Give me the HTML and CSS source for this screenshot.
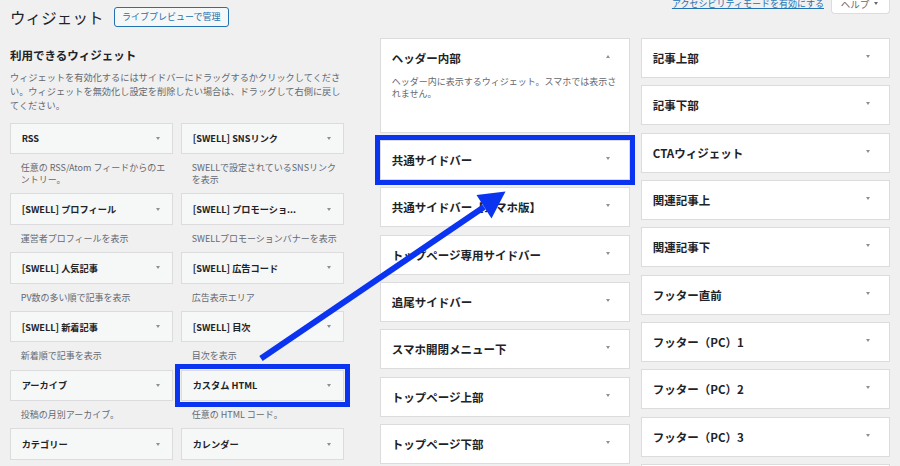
FILE: index.html
```html
<!DOCTYPE html>
<html lang="ja">
<head>
<meta charset="utf-8">
<title>ウィジェット</title>
<link rel="stylesheet" href="styles.css">
</head>
<body>
<div class="wrap">
  <header class="head">
    <div class="head-left">
      <h1 class="title">ウィジェット</h1>
      <a class="btn">ライブプレビューで管理</a>
    </div>
    <div class="meta">
      <a class="meta-link">アクセシビリティモードを有効にする</a>
      <div class="help">ヘルプ <span class="tri tri-down"></span></div>
    </div>
  </header>

  <main class="cols">
    <section class="avail">
      <h2 class="avail-title">利用できるウィジェット</h2>
      <p class="avail-desc">ウィジェットを有効化するにはサイドバーにドラッグするかクリックしてくださ<br>い。ウィジェットを無効化し設定を削除したい場合は、ドラッグして右側に戻し<br>てください。</p>
      <div class="wgrid">
        <div class="witem"><div class="wtop"><span class="wtitle">RSS</span><span class="warr"><span class="tri tri-down"></span></span></div><div class="wdesc">任意の RSS/Atom フィードからのエ<br>ントリー。</div></div>
        <div class="witem"><div class="wtop"><span class="wtitle">[SWELL] SNSリンク</span><span class="warr"><span class="tri tri-down"></span></span></div><div class="wdesc">SWELLで設定されているSNSリンク<br>を表示</div></div>
        <div class="witem"><div class="wtop"><span class="wtitle">[SWELL] プロフィール</span><span class="warr"><span class="tri tri-down"></span></span></div><div class="wdesc">運営者プロフィールを表示</div></div>
        <div class="witem"><div class="wtop"><span class="wtitle">[SWELL] プロモーショ...</span><span class="warr"><span class="tri tri-down"></span></span></div><div class="wdesc">SWELLプロモーションバナーを表示</div></div>
        <div class="witem"><div class="wtop"><span class="wtitle">[SWELL] 人気記事</span><span class="warr"><span class="tri tri-down"></span></span></div><div class="wdesc">PV数の多い順で記事を表示</div></div>
        <div class="witem"><div class="wtop"><span class="wtitle">[SWELL] 広告コード</span><span class="warr"><span class="tri tri-down"></span></span></div><div class="wdesc">広告表示エリア</div></div>
        <div class="witem"><div class="wtop"><span class="wtitle">[SWELL] 新着記事</span><span class="warr"><span class="tri tri-down"></span></span></div><div class="wdesc">新着順で記事を表示</div></div>
        <div class="witem"><div class="wtop"><span class="wtitle">[SWELL] 目次</span><span class="warr"><span class="tri tri-down"></span></span></div><div class="wdesc">目次を表示</div></div>
        <div class="witem"><div class="wtop"><span class="wtitle">アーカイブ</span><span class="warr"><span class="tri tri-down"></span></span></div><div class="wdesc">投稿の月別アーカイブ。</div></div>
        <div class="witem"><div class="wtop hl"><span class="wtitle">カスタム HTML</span><span class="warr"><span class="tri tri-down"></span></span></div><div class="wdesc">任意の HTML コード。</div></div>
        <div class="witem"><div class="wtop"><span class="wtitle">カテゴリー</span><span class="warr"><span class="tri tri-down"></span></span></div></div>
        <div class="witem"><div class="wtop"><span class="wtitle">カレンダー</span><span class="warr"><span class="tri tri-down"></span></span></div></div>
      </div>
    </section>

    <section class="sbcol mid">
      <div class="sb open">
        <div class="sb-row"><h3 class="sb-title">ヘッダー内部</h3><span class="sbarr"><span class="tri tri-up"></span></span></div>
        <p class="sb-desc">ヘッダー内に表示するウィジェット。スマホでは表示さ<br>れません。</p>
      </div>
      <div class="sb hl2"><h3 class="sb-title">共通サイドバー</h3><span class="sbarr"><span class="tri tri-down"></span></span></div>
      <div class="sb"><h3 class="sb-title">共通サイドバー【スマホ版】</h3><span class="sbarr"><span class="tri tri-down"></span></span></div>
      <div class="sb"><h3 class="sb-title">トップページ専用サイドバー</h3><span class="sbarr"><span class="tri tri-down"></span></span></div>
      <div class="sb"><h3 class="sb-title">追尾サイドバー</h3><span class="sbarr"><span class="tri tri-down"></span></span></div>
      <div class="sb"><h3 class="sb-title">スマホ開閉メニュー下</h3><span class="sbarr"><span class="tri tri-down"></span></span></div>
      <div class="sb"><h3 class="sb-title">トップページ上部</h3><span class="sbarr"><span class="tri tri-down"></span></span></div>
      <div class="sb"><h3 class="sb-title">トップページ下部</h3><span class="sbarr"><span class="tri tri-down"></span></span></div>
    </section>

    <section class="sbcol right">
      <div class="sb"><h3 class="sb-title">記事上部</h3><span class="sbarr"><span class="tri tri-down"></span></span></div>
      <div class="sb"><h3 class="sb-title">記事下部</h3><span class="sbarr"><span class="tri tri-down"></span></span></div>
      <div class="sb"><h3 class="sb-title">CTAウィジェット</h3><span class="sbarr"><span class="tri tri-down"></span></span></div>
      <div class="sb"><h3 class="sb-title">関連記事上</h3><span class="sbarr"><span class="tri tri-down"></span></span></div>
      <div class="sb"><h3 class="sb-title">関連記事下</h3><span class="sbarr"><span class="tri tri-down"></span></span></div>
      <div class="sb"><h3 class="sb-title">フッター直前</h3><span class="sbarr"><span class="tri tri-down"></span></span></div>
      <div class="sb"><h3 class="sb-title">フッター（PC）1</h3><span class="sbarr"><span class="tri tri-down"></span></span></div>
      <div class="sb"><h3 class="sb-title">フッター（PC）2</h3><span class="sbarr"><span class="tri tri-down"></span></span></div>
      <div class="sb"><h3 class="sb-title">フッター（PC）3</h3><span class="sbarr"><span class="tri tri-down"></span></span></div>
      <div class="sb"></div>
    </section>
  </main>

  <svg class="arrow" width="900" height="466" viewBox="0 0 900 466" aria-hidden="true">
    <line x1="261" y1="358.5" x2="484" y2="207" stroke="#0a34f0" stroke-width="6"/>
    <polygon points="505.5,191.5 476.5,195 491.5,218.5" fill="#0a34f0"/>
  </svg>
</div>
</body>
</html>
```
FILE: styles.css
```css
html, body {
  margin: 0;
  padding: 0;
  height: 466px;
  overflow: hidden;
}
body {
  background: #f0f0f1;
  color: #1d2327;
  font-family: "Noto Sans CJK JP", "Noto Sans", sans-serif;
}
.wrap {
  position: relative;
  width: 900px;
  height: 466px;
}

/* header */
.head {
  display: flex;
  justify-content: space-between;
  align-items: flex-start;
  height: 38px;
  padding: 0 10px;
  box-sizing: border-box;
}
.head-left {
  display: flex;
  align-items: center;
  margin-top: 7px;
}
.title {
  margin: 0;
  font-size: 15.5px;
  font-weight: 400;
  line-height: 20px;
  letter-spacing: 0.1px;
}
.btn {
  margin-left: 10px;
  height: 20px;
  box-sizing: border-box;
  padding: 0 7.5px;
  border: 1px solid #2271b1;
  border-radius: 3px;
  background: #f6f7f7;
  color: #2271b1;
  font-size: 9px;
  line-height: 18px;
  white-space: nowrap;
}
.meta {
  display: flex;
  align-items: flex-start;
  margin-top: -3px;
}
.meta-link {
  color: #2271b1;
  font-size: 9px;
  line-height: 13px;
  text-decoration: underline;
  text-underline-offset: 1px;
  white-space: nowrap;
}
.help {
  margin-left: 7px;
  margin-top: -1px;
  width: 59px;
  height: 18px;
  box-sizing: border-box;
  border: 1px solid #dcdcde;
  border-top: none;
  border-radius: 0 0 4px 4px;
  background: #fff;
  color: #646970;
  font-size: 9.5px;
  line-height: 14px;
  display: flex;
  align-items: center;
  justify-content: center;
  gap: 5px;
  padding-bottom: 2px;
  padding-right: 2px;
}

/* triangles */
.tri {
  display: inline-block;
  width: 0;
  height: 0;
  border-left: 2.7px solid transparent;
  border-right: 2.7px solid transparent;
}
.tri-down { border-top: 3.8px solid #8c8f94; }
.tri-up { border-bottom: 3.8px solid #8c8f94; }
.help .tri-down { border-top-color: #646970; }

/* columns */
.cols {
  display: flex;
  align-items: flex-start;
  padding: 0 10px;
}
.avail {
  width: 334px;
  margin-right: 36px;
  flex: none;
}
.avail-title {
  margin: 9px 0 0;
  font-size: 11.5px;
  font-weight: 700;
  line-height: 16px;
}
.avail-desc {
  margin: 7px 0 0;
  font-size: 9.2px;
  line-height: 14px;
  color: #646970;
  white-space: nowrap;
}
.wgrid {
  margin-top: 10.5px;
  display: grid;
  grid-template-columns: 163px 163px;
  column-gap: 8px;
}
.wtop {
  height: 31.5px;
  box-sizing: border-box;
  border: 1px solid #dcdcde;
  background: #f6f7f7;
  display: flex;
  align-items: center;
  padding-left: 10.7px;
}
.wtop.hl {
  outline: 5px solid #0a34f0;
  outline-offset: 1.5px;
}
.wtitle {
  flex: 1;
  min-width: 0;
  font-size: 9.2px;
  font-weight: 700;
  white-space: nowrap;
  overflow: hidden;
}
.warr {
  width: 29px;
  flex: none;
  display: flex;
  justify-content: center;
  align-items: center;
}
.wdesc {
  padding: 8px 10.7px 7.3px;
  font-size: 9px;
  line-height: 12px;
  color: #646970;
  white-space: nowrap;
}

/* sidebars */
.sbcol {
  display: flex;
  flex-direction: column;
  gap: 7.35px;
}
.mid { width: 250px; margin-right: 11px; flex: none; }
.right { width: 249px; flex: none; }
.sb {
  height: 40px;
  box-sizing: border-box;
  border: 1px solid #dcdcde;
  background: #fff;
  display: flex;
  align-items: center;
  padding-left: 10.8px;
  flex: none;
}
.sb-title {
  flex: 1;
  margin: 0;
  font-size: 11.5px;
  font-weight: 700;
  line-height: 16px;
  white-space: nowrap;
}
.sbarr {
  width: 43px;
  flex: none;
  display: flex;
  justify-content: center;
  align-items: center;
  margin-top: -3px;
}
.sb.open {
  height: 94.7px;
  flex-direction: column;
  align-items: stretch;
  padding-right: 0;
}
.sb-row {
  height: 37px;
  display: flex;
  align-items: center;
}
.sb-desc {
  margin: 0;
  padding-right: 10px;
  font-size: 9px;
  line-height: 12px;
  color: #646970;
  white-space: nowrap;
}
.sb.hl2 {
  outline: 5px solid #0a34f0;
  outline-offset: 0;
}

/* overlay arrow */
.arrow {
  position: absolute;
  left: 0;
  top: 0;
  pointer-events: none;
}
```
